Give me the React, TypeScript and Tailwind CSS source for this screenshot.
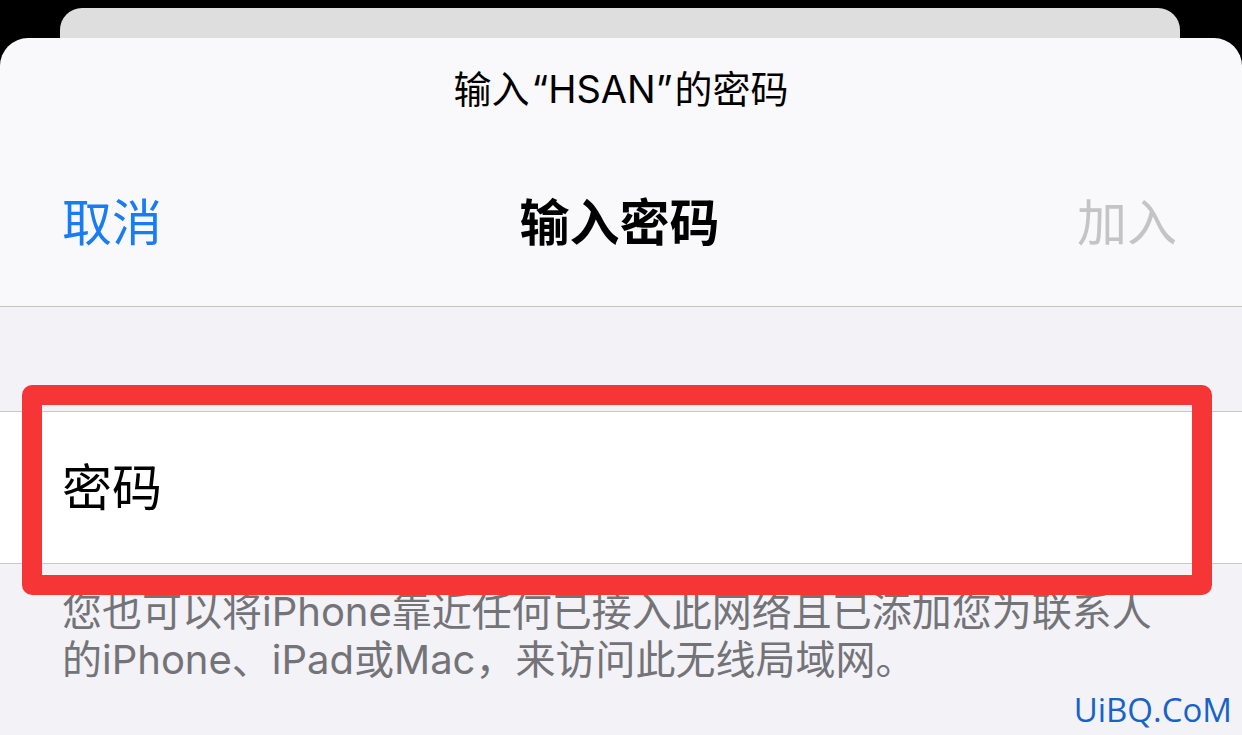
import React from "react";

const FONT = { fontFamily: '"Inter", "Noto Sans CJK SC", sans-serif' };

export default function App() {
  return (
    <div className="w-[1242px] h-[735px] bg-black overflow-hidden flex flex-col" style={FONT}>
      <div className="mt-[8px] ml-[60px] mr-[62px] h-[30px] rounded-t-[22px] bg-[#dedede] shrink-0" />
      <div className="flex-1 flex flex-col rounded-t-[28px] bg-[#f9f9fb] overflow-hidden">
        <div className="h-[106px] shrink-0 flex items-center justify-center text-[38px] text-black leading-none pb-[4px]">
          <span>输入</span>
          <span className="ml-[2px]">“HSAN”</span>
          <span className="ml-[2px]">的密码</span>
        </div>
        <div className="h-[163px] shrink-0 grid grid-cols-3 items-center px-[62px] pr-[65px] pb-[4px] border-b border-[#c6c6c8] text-[50px] leading-none">
          <div className="text-[#1a7cf2]">取消</div>
          <div className="text-center font-semibold text-black">输入密码</div>
          <div className="text-right text-[#c4c4c7]">加入</div>
        </div>
        <div className="relative flex-1 bg-[#f2f2f7]">
          <div className="h-[104px]" />
          <div className="relative h-[153px] bg-white border-y border-[#c8c7cc] flex items-center pl-[62px] text-[50px] leading-none text-black">
            密码
            <div className="absolute left-[22px] top-[-27px] w-[1190px] h-[210px] border-[20px] border-[#f63636] rounded-[10px]" />
          </div>
          <div className="pl-[62px] pt-[24px] text-[40px] leading-[48px] text-[#737378]">
            <div>您也可以将iPhone靠近任何已接入此网络且已添加您为联系人</div>
            <div>的iPhone、iPad或Mac，来访问此无线局域网。</div>
          </div>
          <div
            className="absolute right-[10px] bottom-[9px] text-[33px] leading-none text-[#1763c9]"
            style={{ fontFamily: '"Open Sans", sans-serif' }}
          >
            UiBQ.CoM
          </div>
        </div>
      </div>
    </div>
  );
}
